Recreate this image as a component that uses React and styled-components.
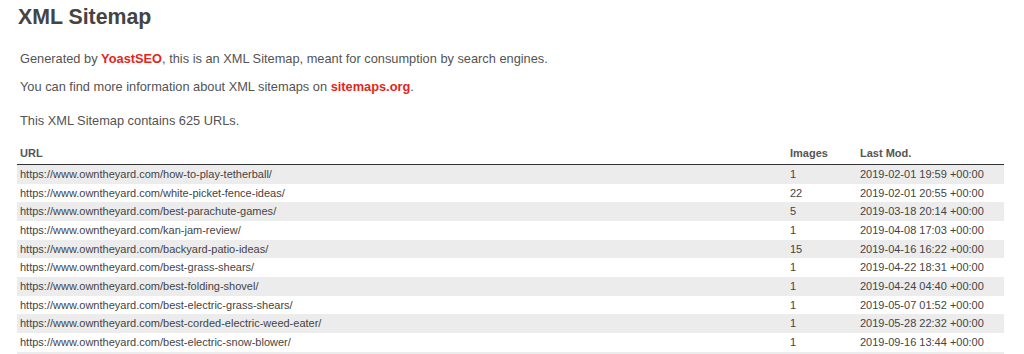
import React from 'react';
import styled, { createGlobalStyle } from 'styled-components';

const GlobalStyle = createGlobalStyle`
  html, body {
    margin: 0;
    padding: 0;
    background: #fff;
  }
  body {
    font-family: "Liberation Sans", Arial, Helvetica, sans-serif;
    color: #545353;
  }
`;

const Page = styled.div`
  padding: 0 20px 0 17px;
`;

const Title = styled.h1`
  margin: 4px 0 0 1px;
  font-size: 21.3px;
  line-height: 26px;
  font-weight: bold;
  color: #444;
`;

const Intro = styled.div`
  padding-left: 3px;
`;

const Para = styled.p`
  margin: ${props => props.gap}px 0 0 0;
  font-size: 12.8px;
  line-height: 16px;
`;

const Link = styled.a`
  color: #e3251b;
  font-weight: bold;
  text-decoration: none;
`;

const Table = styled.table`
  width: 987px;
  margin-top: 18px;
  border-collapse: collapse;
  font-size: 11px;
`;

const Head = styled.th`
  text-align: left;
  font-weight: bold;
  color: #555;
  padding: 0 3px 4px 3px;
  line-height: 13px;
  border-bottom: 1.5px solid #333;
`;

const Row = styled.tr`
  background: ${props => props.odd ? '#ececec' : '#fff'};
`;

const Cell = styled.td`
  padding: 0 3px;
  line-height: 18.67px;
  color: #444;
  white-space: nowrap;
`;

const rows = [
  ['how-to-play-tetherball', 1, '2019-02-01 19:59 +00:00'],
  ['white-picket-fence-ideas', 22, '2019-02-01 20:55 +00:00'],
  ['best-parachute-games', 5, '2019-03-18 20:14 +00:00'],
  ['kan-jam-review', 1, '2019-04-08 17:03 +00:00'],
  ['backyard-patio-ideas', 15, '2019-04-16 16:22 +00:00'],
  ['best-grass-shears', 1, '2019-04-22 18:31 +00:00'],
  ['best-folding-shovel', 1, '2019-04-24 04:40 +00:00'],
  ['best-electric-grass-shears', 1, '2019-05-07 01:52 +00:00'],
  ['best-corded-electric-weed-eater', 1, '2019-05-28 22:32 +00:00'],
  ['best-electric-snow-blower', 1, '2019-09-16 13:44 +00:00'],
  ['best-leaf-blower', 1, '2019-09-20 10:12 +00:00'],
];

export default function App() {
  return (
    <Page>
      <GlobalStyle />
      <Title>XML Sitemap</Title>
      <Intro>
        <Para gap={21}>
          Generated by <Link href="#">YoastSEO</Link>, this is an XML Sitemap, meant for consumption by search engines.
        </Para>
        <Para gap={12}>
          You can find more information about XML sitemaps on <Link href="#">sitemaps.org</Link>.
        </Para>
        <Para gap={18}>This XML Sitemap contains 625 URLs.</Para>
      </Intro>
      <Table>
        <colgroup>
          <col style={{ width: 770 }} />
          <col style={{ width: 70 }} />
          <col />
        </colgroup>
        <thead>
          <tr>
            <Head>URL</Head>
            <Head>Images</Head>
            <Head>Last Mod.</Head>
          </tr>
        </thead>
        <tbody>
          {rows.map((r, i) => (
            <Row key={r[0]} odd={i % 2 === 0}>
              <Cell>https://www.owntheyard.com/{r[0]}/</Cell>
              <Cell>{r[1]}</Cell>
              <Cell>{r[2]}</Cell>
            </Row>
          ))}
        </tbody>
      </Table>
    </Page>
  );
}
